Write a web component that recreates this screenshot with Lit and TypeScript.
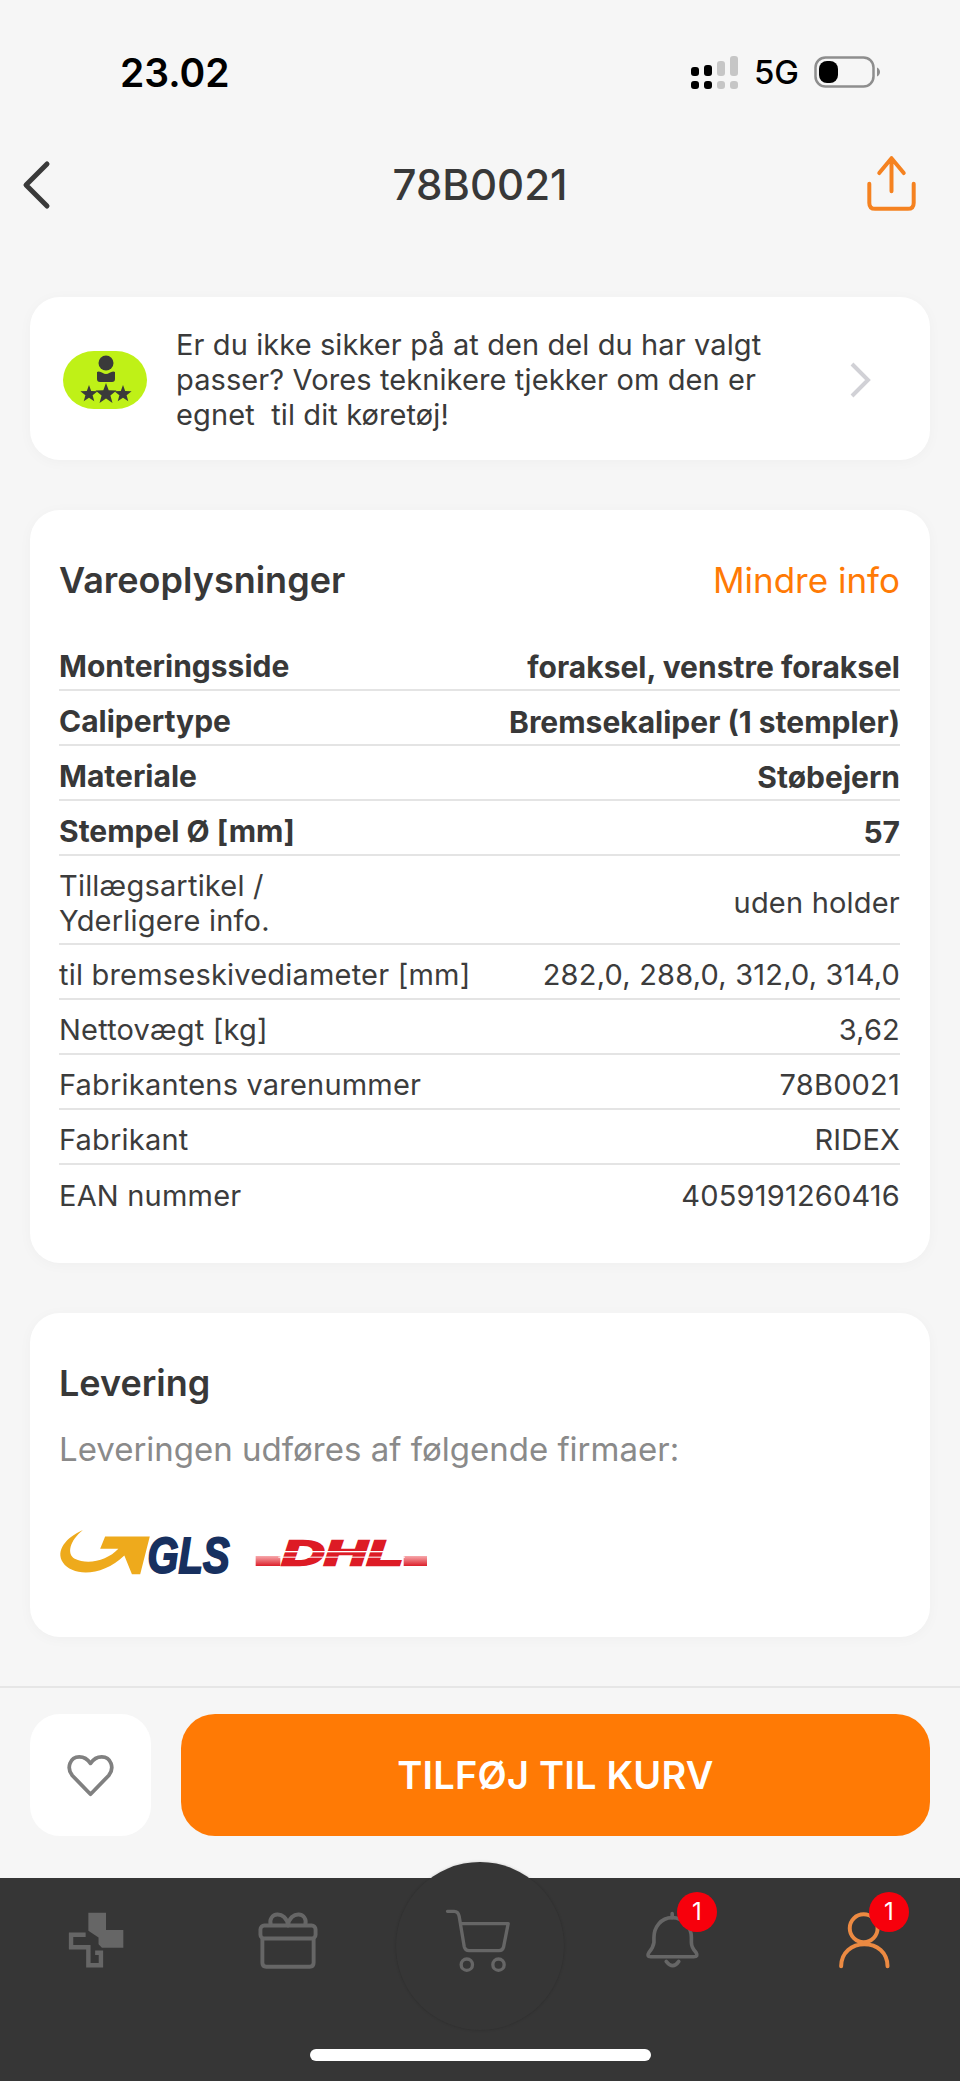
import { css, html, LitElement, svg } from "lit";
import { customElement } from "lit/decorators.js";

interface SpecRow {
  label: string;
  value: string;
  bold?: boolean;
  tall?: boolean;
}

const ROWS: SpecRow[] = [
  { label: "Monteringsside", value: "foraksel, venstre foraksel", bold: true },
  { label: "Calipertype", value: "Bremsekaliper (1 stempler)", bold: true },
  { label: "Materiale", value: "Støbejern", bold: true },
  { label: "Stempel Ø [mm]", value: "57", bold: true },
  { label: "Tillægsartikel /\nYderligere info.", value: "uden holder", tall: true },
  { label: "til bremseskivediameter [mm]", value: "282,0, 288,0, 312,0, 314,0" },
  { label: "Nettovægt [kg]", value: "3,62" },
  { label: "Fabrikantens varenummer", value: "78B0021" },
  { label: "Fabrikant", value: "RIDEX" },
  { label: "EAN nummer", value: "4059191260416" },
];

const star = (cx: number, cy: number, r: number) => {
  const pts: string[] = [];
  for (let i = 0; i < 10; i++) {
    const rad = i % 2 ? r * 0.42 : r;
    const a = (Math.PI / 5) * i - Math.PI / 2;
    pts.push(`${(cx + rad * Math.cos(a)).toFixed(1)},${(cy + rad * Math.sin(a)).toFixed(1)}`);
  }
  return svg`<polygon points=${pts.join(" ")} fill="#3a3a3a" />`;
};

@customElement("app-root")
export class AppRoot extends LitElement {
  static override styles = css`
    :host {
      display: block;
      height: 2081px;
      overflow: hidden;
      background: #f6f6f6;
      font-family: Inter, "Noto Sans", sans-serif;
      color: #383838;
    }

    svg {
      display: block;
      overflow: visible;
    }

    .page {
      display: flex;
      flex-direction: column;
      height: 2081px;
    }

    .status {
      height: 144px;
      flex: none;
      display: flex;
      align-items: center;
      justify-content: space-between;
      padding: 0 80px 0 120px;
      box-sizing: border-box;
      color: #000;
    }

    .time {
      font-size: 39px;
      font-weight: 600;
      line-height: 1;
    }

    .status-right {
      display: flex;
      align-items: center;
      gap: 15px;
    }

    .net {
      font-size: 33px;
      font-weight: 500;
      line-height: 1;
    }

    .header {
      flex: none;
      height: 121px;
      padding: 0 22px;
      box-sizing: border-box;
      display: grid;
      grid-template-columns: 1fr auto 1fr;
      align-items: start;
    }

    .title {
      font-size: 42px;
      font-weight: 500;
      line-height: 50px;
      margin-top: 16px;
    }

    .back {
      margin-top: 17px;
    }

    .share {
      justify-self: end;
      margin: 9px 20px 0 0;
    }

    .content {
      flex: 1;
      padding: 32px 30px 0;
      display: flex;
      flex-direction: column;
      gap: 50px;
    }

    .card {
      background: #fff;
      border-radius: 30px;
      box-shadow: 0 2px 14px rgba(0, 0, 0, 0.03);
    }

    .banner {
      height: 163px;
      display: flex;
      align-items: center;
      padding: 2px 60px 0 33px;
      box-sizing: border-box;
    }

    .blob {
      flex: none;
      width: 84px;
      height: 58px;
      border-radius: 31px / 29px;
      background: #bff117;
      margin-right: 29px;
    }

    .banner p {
      margin: 0;
      flex: 1;
      font-size: 29px;
      letter-spacing: 0.1px;
      line-height: 35px;
      white-space: pre-wrap;
      color: #3a3a3a;
    }

    .info {
      height: 753px;
      padding: 46px 30px 0 29px;
      box-sizing: border-box;
    }

    .info-head {
      display: flex;
      justify-content: space-between;
      align-items: center;
      height: 48px;
      margin-bottom: 32px;
    }

    h2 {
      margin: 0;
      font-size: 36px;
      font-weight: 600;
      line-height: 48px;
      color: #383838;
    }

    .more {
      font-size: 35px;
      color: #ff7a05;
    }

    .row {
      height: 55px;
      box-sizing: border-box;
      display: flex;
      justify-content: space-between;
      align-items: center;
      padding-top: 6px;
      border-bottom: 2px solid #e4e4e4;
      font-size: 29px;
      letter-spacing: 0.2px;
      color: #3c3c3c;
    }

    .row:last-child {
      border-bottom: none;
    }

    .row.bold {
      padding-top: 8px;
      font-size: 30px;
      font-weight: 700;
      letter-spacing: 0;
      color: #383838;
    }

    .row.tall {
      height: 89px;
    }

    .label {
      white-space: pre-line;
      line-height: 35px;
    }

    .delivery {
      height: 324px;
      padding: 46px 30px 0 29px;
      box-sizing: border-box;
    }

    .delivery p {
      margin: 22px 0 0;
      font-size: 33px;
      line-height: 40px;
      color: #8a8a8a;
    }

    .logos {
      display: flex;
      align-items: center;
      gap: 24px;
      margin-top: 61px;
    }

    .actions {
      flex: none;
      height: 192px;
      box-sizing: border-box;
      border-top: 2px solid #e6e6e6;
      padding: 26px 30px 0;
      display: flex;
      gap: 30px;
    }

    .fav {
      flex: none;
      width: 121px;
      height: 122px;
      border-radius: 30px;
      background: #fff;
      display: flex;
      align-items: center;
      justify-content: center;
    }

    .add {
      flex: 1;
      height: 122px;
      border-radius: 34px;
      background: #ff7a05;
      color: #fff;
      display: flex;
      align-items: center;
      justify-content: center;
      font-size: 38px;
      font-weight: 600;
      letter-spacing: 0.2px;
    }

    .nav {
      flex: none;
      height: 203px;
      background: #363636;
      position: relative;
      box-sizing: border-box;
      display: flex;
      flex-direction: column;
      align-items: center;
    }

    .cart-circle {
      position: absolute;
      left: 396px;
      top: -16px;
      width: 168px;
      height: 168px;
      border-radius: 50%;
      background: #363636;
      box-shadow: 0 0 3px rgba(0, 0, 0, 0.18);
    }

    .tabs {
      position: relative;
      width: 100%;
      display: grid;
      grid-template-columns: repeat(5, 1fr);
      height: 124px;
      align-items: center;
    }

    .tab {
      position: relative;
      display: flex;
      justify-content: center;
    }

    .cart-icon {
      margin-right: 6px;
    }

    .badge {
      position: absolute;
      left: 101px;
      top: -19px;
      width: 40px;
      height: 40px;
      border-radius: 50%;
      background: #f7000c;
      color: #fff;
      font-size: 24px;
      line-height: 40px;
      text-align: center;
    }

    .home-bar {
      position: relative;
      width: 341px;
      height: 12px;
      margin-top: 47px;
      border-radius: 6px;
      background: #fff;
    }
  `;

  private renderStatusIcons() {
    return html`
      <svg width="48" height="33" viewBox="0 0 48 33">
        <g fill="#000">
          <rect x="0" y="11" width="8" height="9" rx="3" />
          <rect x="13" y="9" width="8" height="11" rx="3" />
          <rect x="0" y="25" width="8" height="8" rx="3" />
          <rect x="13" y="25" width="8" height="8" rx="3" />
        </g>
        <g fill="#c6c6c6">
          <rect x="26" y="5" width="8" height="15" rx="3" />
          <rect x="39" y="0" width="8" height="20" rx="3" />
          <rect x="26" y="25" width="8" height="8" rx="3" />
          <rect x="39" y="25" width="8" height="8" rx="3" />
        </g>
      </svg>
      <span class="net">5G</span>
      <svg width="66" height="32" viewBox="0 0 66 32">
        <rect x="1.5" y="1.5" width="58" height="29" rx="10" fill="none" stroke="#8e8e8e" stroke-width="2.5" />
        <rect x="5" y="5" width="19" height="22" rx="8" fill="#000" />
        <path d="M63 11.500c2 1 3 2.600 3 4.500s-1 3.500-3 4.500z" fill="#8e8e8e" />
      </svg>
    `;
  }

  private renderGls() {
    return html`
      <svg width="172" height="45" viewBox="85 98 515 136">
        <path
          fill="#eeaa1c"
          d="M155 98C105 120 70 160 95 197C122 238 215 240 280 175L303 232H328L357 118H222L207 155H262C230 190 170 205 130 185C105 170 115 130 155 98Z"
        />
        <text x="350" y="229" font-family="Liberation Sans" font-weight="700" font-style="italic" font-size="150" fill="#17305f" stroke="#17305f" stroke-width="6" textLength="248" lengthAdjust="spacingAndGlyphs">GLS</text>
      </svg>
    `;
  }

  private renderDhl() {
    return html`
      <svg width="172" height="26" viewBox="670 122 516 78">
        <defs>
          <linearGradient id="stripe" x1="0" y1="0" x2="0" y2="1">
            <stop offset="0" stop-color="#f7a9ac" />
            <stop offset="1" stop-color="#dc1f2a" />
          </linearGradient>
        </defs>
        <rect x="672" y="170" width="74" height="30" fill="url(#stripe)" />
        <rect x="1116" y="170" width="70" height="30" fill="url(#stripe)" />
        <text x="750" y="198" font-family="Liberation Sans" font-weight="700" font-style="italic" font-size="104" fill="#dd1b25" stroke="#dd1b25" stroke-width="7" textLength="364" lengthAdjust="spacingAndGlyphs">DHL</text>
        <g fill="#fff">
          <rect x="740" y="155" width="380" height="4" />
          <rect x="740" y="172" width="380" height="3" />
        </g>
      </svg>
    `;
  }

  private renderBadge() {
    return html`<div class="badge">1</div>`;
  }

  override render() {
    return html`
      <div class="page">
        <div class="status">
          <span class="time">23.02</span>
          <div class="status-right">${this.renderStatusIcons()}</div>
        </div>

        <div class="header">
          <svg class="back" width="30" height="48" viewBox="0 0 30 48" fill="none" stroke="#3a3a3a" stroke-width="5" stroke-linecap="round" stroke-linejoin="round">
            <path d="M25 3L4 24L25 45" />
          </svg>
          <div class="title">78B0021</div>
          <svg class="share" width="53" height="60" viewBox="75 40 160 180" fill="none" stroke="#f58220" stroke-width="12" stroke-linecap="round" stroke-linejoin="round">
            <path d="M155 155V55M118 100L155 55L192 100" />
            <path d="M88 132V190Q88 208 106 208H204Q222 208 222 190V132" />
          </svg>
        </div>

        <div class="content">
          <div class="card banner">
            <div class="blob">
              <svg width="84" height="58" viewBox="0 0 84 58">
                <circle cx="43" cy="12" r="7.500" fill="#3a3a3a" />
                <path d="M34 21C37 19 40 23 43 23S49 19 52 21V28Q52 31 49 31H37Q34 31 34 28Z" fill="#3a3a3a" />
                ${star(26, 43, 9)} ${star(43, 43, 11)} ${star(60, 43, 9)}
              </svg>
            </div>
            <p>Er du ikke sikker på at den del du har valgt
passer? Vores teknikere tjekker om den er
egnet  til dit køretøj!</p>
            <svg width="20" height="34" viewBox="0 0 20 34" fill="none" stroke="#d1d1d6" stroke-width="4">
              <path d="M2 1L18 17L2 33" />
            </svg>
          </div>

          <div class="card info">
            <div class="info-head">
              <h2>Vareoplysninger</h2>
              <span class="more">Mindre info</span>
            </div>
            ${ROWS.map(
              (r) => html`
                <div class="row ${r.bold ? "bold" : ""} ${r.tall ? "tall" : ""}">
                  <span class="label">${r.label}</span>
                  <span>${r.value}</span>
                </div>
              `,
            )}
          </div>

          <div class="card delivery">
            <h2>Levering</h2>
            <p>Leveringen udføres af følgende firmaer:</p>
            <div class="logos">${this.renderGls()} ${this.renderDhl()}</div>
          </div>
        </div>

        <div class="actions">
          <div class="fav">
            <svg width="49" height="43" viewBox="0 0 50 46" fill="none" stroke="#808080" stroke-width="4" stroke-linejoin="round">
              <path d="M25 43L5.500 23C-1 15 3 3 13 3C18 3 22 5.500 25 10C28 5.500 32 3 37 3C47 3 51 15 44.500 23Z" />
            </svg>
          </div>
          <div class="add">TILFØJ TIL KURV</div>
        </div>

        <div class="nav">
          <div class="cart-circle"></div>
          <div class="tabs">
            <div class="tab">
              <svg width="56" height="56" viewBox="210 695 165 165">
                <path fill="#666" d="M270 697H322V748H373V800H310L300 790V770L270 750Z" />
                <path fill="none" stroke="#666" stroke-width="13" d="M262 762H219V799H270V852H307V815H290" />
              </svg>
            </div>
            <div class="tab">
              <svg width="62" height="60" viewBox="770 685 190 185" fill="none" stroke="#666" stroke-width="12" stroke-linejoin="round">
                <rect x="780" y="733" width="170" height="40" rx="12" />
                <path d="M786 773V848Q786 860 798 860H932Q944 860 944 848V773" />
                <path d="M812 733C800 690 860 685 865 733C870 685 930 690 918 733" />
              </svg>
            </div>
            <div class="tab">
              <svg class="cart-icon" width="67" height="65" viewBox="40 50 200 195" fill="none" stroke="#666" stroke-width="10" stroke-linecap="round" stroke-linejoin="round">
                <path d="M50 60H70Q82 60 85 75L100 165Q103 178 115 178H205Q215 178 218 168L232 97H92" />
                <circle cx="108" cy="220" r="17" />
                <circle cx="203" cy="220" r="17" />
              </svg>
            </div>
            <div class="tab">
              <svg width="57" height="59" viewBox="485 680 172 178" fill="none" stroke="#666" stroke-width="11" stroke-linecap="round" stroke-linejoin="round">
                <path d="M570 700C535 700 515 730 515 760V775Q513 790 500 805Q492 818 505 818H635Q650 818 642 805Q628 790 628 775V760C628 730 605 700 570 700Z" />
                <path d="M570 688V700M552 832Q572 858 590 832" />
              </svg>
              ${this.renderBadge()}
            </div>
            <div class="tab">
              <svg width="55" height="58" viewBox="1070 685 165 175" fill="none" stroke="#ec8a42" stroke-width="12" stroke-linecap="round">
                <circle cx="1150" cy="737" r="42" />
                <path d="M1082 852C1082 810 1115 785 1152 785C1190 785 1222 810 1222 852" />
              </svg>
              ${this.renderBadge()}
            </div>
          </div>
          <div class="home-bar"></div>
        </div>
      </div>
    `;
  }
}
